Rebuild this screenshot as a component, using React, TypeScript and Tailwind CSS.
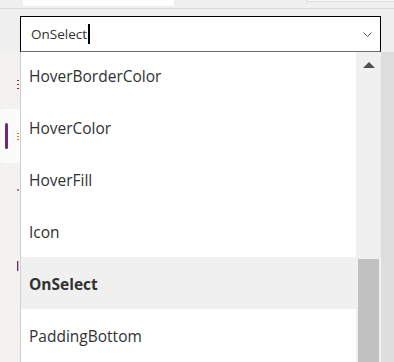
const ITEMS = ['HoverBorderColor', 'HoverColor', 'HoverFill', 'Icon', 'OnSelect', 'PaddingBottom'];
const SELECTED = 'OnSelect';

function LeftRail() {
  return (
    <div className="w-[21px] shrink-0 bg-[#f3f2f1] border-r border-[#d2d0ce] flex flex-col">
      <div className="h-[28px]" />
      <div className="flex flex-col items-end gap-[3px] pr-[1px]">
        <div className="w-[2px] h-[1px] bg-[#8a2a2a]" />
        <div className="w-[2px] h-[1px] bg-[#8a2a2a]" />
        <div className="w-[2px] h-[1px] bg-[#8a2a2a]" />
      </div>
      <div className="h-[20px]" />
      <div className="h-[54px] bg-[#fbfbfa] rounded-l-[4px] flex items-center">
        <div className="ml-[5px] w-[3px] h-[26px] rounded-full bg-[#742774]" />
        <div className="ml-auto mr-[1px] flex flex-col gap-[2px]">
          <div className="w-[2px] h-[1px] bg-[#c87a3a]" />
          <div className="w-[2px] h-[1px] bg-[#c87a3a]" />
          <div className="w-[2px] h-[1px] bg-[#c87a3a]" />
        </div>
      </div>
      <div className="h-[26px]" />
      <div className="ml-auto mr-[1px] w-[2px] h-[2px] bg-[#a08080]" />
      <div className="h-[70px]" />
      <div className="ml-auto mr-[1px] w-[2px] h-[10px] border-l border-[#7a2a4a] bg-[#b0b8d8]" />
    </div>
  );
}

export default function App() {
  return (
    <div
      className="w-[394px] h-[362px] bg-[#efefef] overflow-hidden flex flex-col"
      style={{ fontFamily: '"Open Sans", "Noto Sans", sans-serif' }}
    >
      <div className="h-[9px] shrink-0 border-b border-[#d9d9d9] flex">
        <div className="ml-[23px] w-[151px] h-[6px] bg-white" />
        <div className="ml-auto w-[88px] h-[2px] bg-[#f7f7f7] border-l border-b border-[#dcdcdc]" />
      </div>
      <div className="pl-[20px] pt-[7px] shrink-0">
        <div className="w-[361px] h-[36px] bg-white border border-black border-b-[#6b6b6b] flex items-center pl-[10px] pr-[2px]">
          <span className="text-[13.5px] text-[#323130] leading-none pt-[1px]">OnSelect</span>
          <span className="ml-[1px] w-[2px] h-[20px] bg-black" />
          <svg className="ml-auto w-[9px] h-[5px]" viewBox="0 0 9 5" fill="none" stroke="#505050" strokeWidth={1}>
            <polyline points="0.5,0.5 4.5,4.5 8.5,0.5" />
          </svg>
          <span className="w-[6px]" />
        </div>
      </div>
      <div className="flex-1 flex min-h-0">
        <LeftRail />
        <div className="w-[335px] shrink-0 bg-white overflow-hidden">
          <div className="mt-[-3px]">
            {ITEMS.map((item) => (
              <div
                key={item}
                className={`h-[52px] flex items-center pl-[8px] pt-[4px] text-[15.5px] text-[#323130] ${
                  item === SELECTED ? 'bg-[#f0f0f0] font-bold' : ''
                }`}
              >
                {item}
              </div>
            ))}
          </div>
        </div>
        <div className="w-[25px] shrink-0 bg-[#f0f0f0] flex flex-col items-center">
          <div className="mt-[10px] w-0 h-0 border-l-[6px] border-r-[6px] border-b-[6px] border-l-transparent border-r-transparent border-b-[#505050]" />
          <div className="mt-[191px] w-[21px] flex-1 bg-[#c1c1c1]" />
        </div>
        <div className="flex-1 bg-[#dedede]" />
      </div>
    </div>
  );
}
